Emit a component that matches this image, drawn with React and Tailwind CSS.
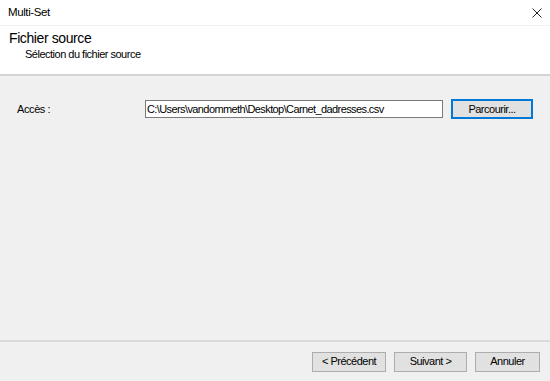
import React from 'react';

const font = { fontFamily: '"Segoe UI", "Liberation Sans", Arial, sans-serif' };

function WinButton({ children, width }) {
  return (
    <button
      type="button"
      className={`h-[20px] ${width} flex items-center justify-center bg-[#e1e1e1] border border-[#adadad] text-[11px] tracking-[-0.5px] text-black`}
    >
      {children}
    </button>
  );
}

export default function App() {
  return (
    <div className="w-[550px] h-[381px] flex flex-col bg-[#f0f0f0] overflow-hidden" style={font}>
      <div className="h-[26px] bg-white flex items-center justify-between pl-[8px] pr-[7px] border-b border-[#f2f2f2]">
        <span className="text-[11.5px] tracking-[-0.4px] text-black">Multi-Set</span>
        <svg width="10" height="10" viewBox="0 0 10 10" className="mr-[1px]">
          <path d="M0.5 0.5 L9.5 9.5 M9.5 0.5 L0.5 9.5" stroke="#222" strokeWidth="1" fill="none" />
        </svg>
      </div>

      <div className="h-[50px] bg-white flex flex-col pl-[9px] pt-[3px] border-b-2 border-[#d4d4d4]">
        <span className="text-[14px] leading-[18px] tracking-[-0.4px] text-black">Fichier source</span>
        <span className="text-[11px] leading-[14px] tracking-[-0.5px] text-black pl-[16px]">
          Sélection du fichier source
        </span>
      </div>

      <div className="flex-1 flex flex-col border-b-2 border-[#dadada]">
        <div className="flex items-center mt-[23px] h-[20px]">
          <span className="text-[11px] tracking-[-0.4px] text-black pl-[17px] w-[145px]">Accès :</span>
          <div className="h-[18px] w-[298px] bg-white border border-[#7a7a7a] flex items-center px-[1px] text-[11px] text-black tracking-[-0.6px]">
            C:\Users\vandommeth\Desktop\Carnet_dadresses.csv
          </div>
          <div className="ml-[8px] w-[82px]">
            <button
              type="button"
              className="h-[20px] w-[82px] flex items-center justify-center bg-[#e1e1e1] border-2 border-[#0078d7] text-[11px] tracking-[-0.5px] text-black"
            >
              Parcourir...
            </button>
          </div>
        </div>
      </div>

      <div className="h-[39px] flex items-center justify-end gap-[8px] pr-[10px]">
        <WinButton width="w-[74px]">&lt; Précédent</WinButton>
        <WinButton width="w-[73px]">Suivant &gt;</WinButton>
        <WinButton width="w-[65px]">Annuler</WinButton>
      </div>
    </div>
  );
}
